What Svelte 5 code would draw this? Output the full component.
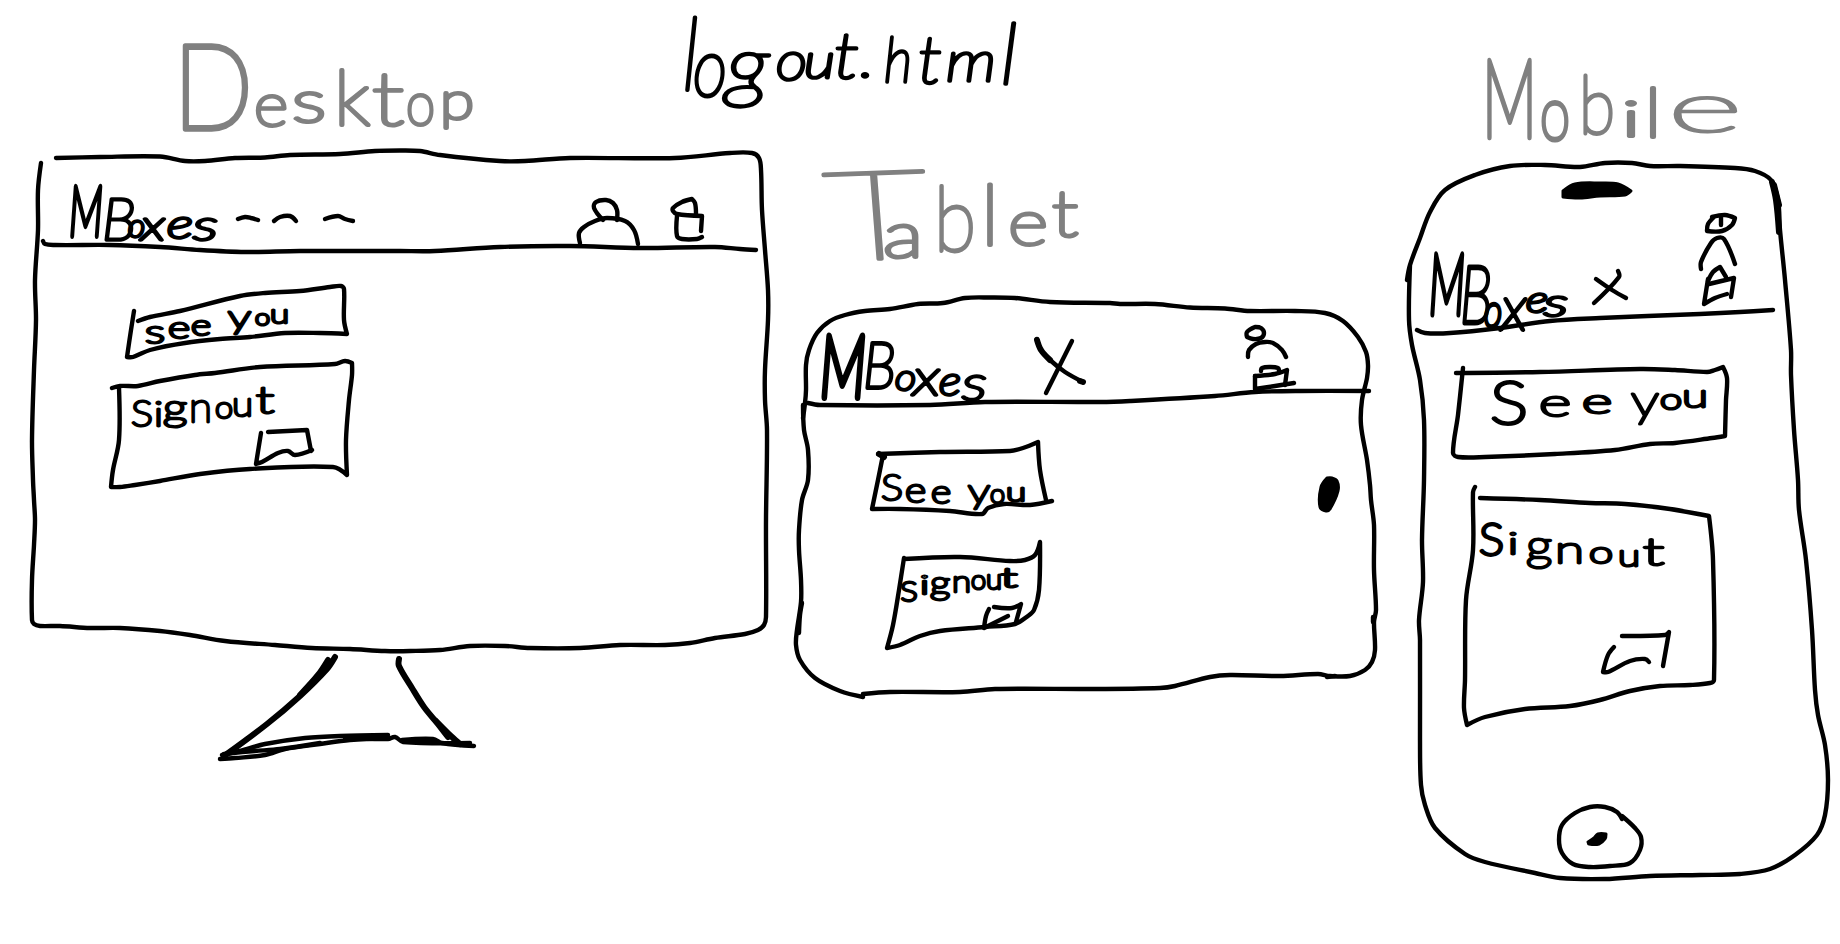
<script>
  // Turns a list of pen points into a smooth stroke; sharp turns stay corners.
  function ink(src) {
    const p = src.split(' ').map((s) => s.split(',').map(Number));
    const n = p.length;
    const tan = p.map((c, i) => {
      if (i === 0 || i === n - 1) return [0, 0];
      const a = [c[0] - p[i - 1][0], c[1] - p[i - 1][1]];
      const b = [p[i + 1][0] - c[0], p[i + 1][1] - c[1]];
      const la = Math.hypot(...a);
      const lb = Math.hypot(...b);
      const dot = (a[0] * b[0] + a[1] * b[1]) / (la * lb || 1);
      if (dot < 0.35) return [0, 0];
      const t = [a[0] + b[0], a[1] + b[1]];
      const lt = Math.hypot(...t);
      return [t[0] / lt, t[1] / lt];
    });
    let d = `M${p[0]}`;
    for (let i = 1; i < n; i++) {
      const k = Math.hypot(p[i][0] - p[i - 1][0], p[i][1] - p[i - 1][1]) / 3;
      const r = (v) => v.toFixed(1);
      d += `C${r(p[i - 1][0] + tan[i - 1][0] * k)},${r(p[i - 1][1] + tan[i - 1][1] * k)} ${r(p[i][0] - tan[i][0] * k)},${r(p[i][1] - tan[i][1] * k)} ${p[i]}`;
    }
    return d;
  }

  const desktop = {
    name: 'desktop',
    strokes: [
      '56,158 100,157 160,156.5 185,161 205,161 235,158 265,157.5 290,155 340,154 375,151 400,150.5 420,151 440,155 500,161 525,161 570,158 675,158 730,153 752,153 759,158 761,170 762,210 765,250 768,290 768,320 765,370 765,400 767,430 766,520 766,617 764,625 758,630 745,634 715,638 690,643 665,645 620,645 580,648 530,648 505,646 470,646 440,650 410,651 385,651 350,649 312,648 275,645 225,641 190,635 160,631 120,628 90,628 60,626 40,626 34,624 32,620 32,580 34,545 35,520 34,500 33,480 32,440 34,370 36,320 35,280 38,230 38,190 41,163',
      '43,241 45,244 55,245 110,245 160,247 200,250 245,252 300,251 400,251 435,251 500,247 570,246 640,248 715,247 740,249 756,250',
      '134,311 131,330 127,357 133,357 150,350 185,343 220,339 250,337 285,333 320,333 347,334 344,320 344,289 341,286 330,287 300,291 265,293 240,296 180,311 150,317 138,321',
      '112,388 120,386 138,386 160,381 195,375 215,373 260,367 335,364 345,361 352,363 352,375 349,400 346,440 347,475 333,467 250,469 200,474 160,481 135,485 120,487 111,487 113,470 119,440 119,388',
      '268,432 307,430 311,451',
      '261,433 256,464 262,462 278,453 288,451 295,455 312,450',
      '238,219 245,217 251,218 258,220',
      '274,221 280,217 290,216 296,221',
      '325,219 338,216 345,219 353,221',
      '603,220 594,208 596,202 606,200 613,203 617,210 617,220',
      '580,243 579,233 584,227 595,221 607,218 625,221 634,230 638,244',
      '696,213 695,203 692,199 682,202 673,208 673,211 677,214 702,216 701,231',
      '677,216 677,236 682,239 697,239 702,237'
    ],
    heavy: [
      '335,657 327,669 300,696 267,724 224,756',
      '328,660 318,675 300,695',
      '399,659 399,666 412,688 424,707 438,724 448,737',
      '436,721 452,737 460,744'
    ],
    light: [
      '222,755 240,751 265,744 305,738 340,736 388,735',
      '345,738 388,739 395,737 403,742 470,743',
      '220,759 235,758 265,755 285,749 320,744 350,740 390,738',
      '402,740 433,739 442,743 474,746',
      '224,754 255,751 280,749 320,743'
    ],
    fills: []
  };

  const tablet = {
    name: 'tablet',
    strokes: [
      '803,418 805,403 806,390 806,365 809,350 817,333 830,321 845,315 865,311 890,309 918,304 943,303 965,298 990,297.5 1015,298 1050,302 1110,303 1120,304 1155,304 1190,307.5 1225,308.5 1250,311 1295,311 1325,313 1343,321 1358,337 1366,352 1368,365 1367,378 1362,400 1361,425 1367,460 1370,485 1371,500 1374,525 1374,570 1376,610 1374,622 1375,650 1372,662 1365,670 1350,676 1330,676 1318,674 1280,676 1230,675 1210,677 1175,686 1160,688 1095,689 995,689 960,692 890,692 863,694',
      '803,405 804,430 808,450 808,480 802,500 799,530 799,550 801,580 801,602 797,630 796,645 800,660 815,678 840,691 863,697',
      '802,603 800,615 799,633',
      '808,403 820,405 930,405 985,402 1100,402 1130,401 1215,396 1255,392 1300,391 1369,391',
      '1327,677 1335,676',
      '1373,617 1373,622',
      '878,454 940,452 1010,451 1023,448 1038,442 1040,470 1046,500',
      '1052,501 1030,505 1004,504 988,508 982,514 950,511 900,509 872,509 878,480 883,455',
      '904,559 960,557 1010,561 1025,560 1035,555 1040,542 1039,590 1034,610 1028,616 1015,624 985,627 940,631 920,636 900,645 887,648 893,625 899,590 904,558',
      '994,607 1012,608 1021,604 1016,622',
      '989,609 986,616 984,628 1008,616',
      '1037,339 1041,350 1050,360 1065,372 1083,382',
      '1072,341 1061,363 1046,393',
      '1255,327 1247,332 1247,337 1253,339 1261,338 1264,333 1261,328 1255,327',
      '1248,357 1249,350 1256,344 1265,342 1273,343 1282,350 1286,357',
      '1261,371 1262,368 1270,367 1278,368 1279,371',
      '1255,376 1275,374 1287,370 1285,385',
      '1255,376 1255,389 1275,386 1294,383'
    ],
    heavy: ['1037,340 1041,350 1050,360', '1083,382 1080,381', '879,454 884,457'],
    light: [],
    fills: ['1327,478 1321,487 1320,507 1326,511 1330,509 1338,491 1337,481 1332,478 1327,478']
  };

  const phone = {
    name: 'mobile',
    strokes: [
      '1407,280 1410,265 1420,238 1430,212 1445,190 1475,175 1510,166 1545,165 1580,167 1605,163 1632,163 1650,166 1680,166 1735,168 1755,171 1771,180 1778,200 1780,230 1785,280 1791,350 1791,375 1794,430 1798,480 1799,510 1806,560 1812,630 1815,690 1818,715 1825,745 1828,780 1825,815 1817,835 1795,855 1770,869 1740,874 1700,875 1650,876 1605,879 1560,878 1535,873 1485,862 1465,854 1435,828 1425,805 1421,785 1420,740 1420,640 1419,620 1423,582 1422,540 1424,480 1424,420 1420,380 1412,345 1409,320 1410,265',
      '1417,330 1425,333 1450,333 1500,328 1550,321 1600,318 1700,314 1740,312 1773,310',
      '1456,373 1540,372 1640,369 1675,370 1707,372 1715,370 1723,367 1727,378 1726,400 1725,436 1712,438 1675,443 1650,444 1615,450 1555,454 1485,457 1458,457 1453,453 1458,415 1463,368',
      '1475,487 1473,492 1473,550 1466,600 1465,680 1464,708 1467,725 1485,717 1525,709 1570,706 1600,700 1630,691 1660,686 1690,685 1710,683 1714,680 1713,560 1709,516 1670,509 1625,504 1590,503 1540,500 1480,498',
      '1622,636 1665,635 1669,632 1663,666',
      '1614,647 1608,655 1603,672 1608,672 1630,661 1645,659 1649,662',
      '1622,819 1617,812 1605,807 1590,807 1575,813 1562,825 1559,840 1562,853 1573,864 1590,867 1610,866 1630,863 1640,850 1641,837 1635,828 1622,816',
      '1596,279 1612,290 1626,298',
      '1618,271 1619,277 1594,303',
      '1712,217 1725,215 1735,218 1732,225 1722,231 1707,231 1708,224 1714,217',
      '1721,218 1721,225',
      '1701,269 1701,262 1711,243 1717,238 1724,239 1735,264',
      '1708,281 1713,272 1720,267 1726,277',
      '1709,284 1734,278 1731,297',
      '1708,279 1704,304 1715,298 1727,294'
    ],
    heavy: ['1772,182 1776,200 1779,232', '1774,185 1779,205'],
    light: [],
    fills: [
      '1563,191 1575,184 1600,183 1618,184 1631,191 1625,195 1600,196 1580,198 1563,197 1563,191',
      '1588,842 1594,838 1598,834 1606,834 1605,839 1599,844 1589,844 1588,842'
    ]
  };

  const devices = [desktop, tablet, phone];

  // Each letter: character, left edge, width, baseline, font size, stroke width, tilt.
  const words = [
    { pen: 'title', g: [['l', 682, 17, 90, 100, 4], ['o', 693, 34, 96, 82, 4], ['g', 726, 43, 92, 78, 3.6], ['o', 776, 31, 80, 54], ['u', 804, 31, 78, 48], ['t', 834, 25, 78, 64], ['.', 860, 14, 77, 50], ['h', 884, 28, 82, 62], ['t', 918, 24, 83, 66], ['m', 946, 50, 81, 56], ['l', 1000, 18, 84, 84]] },
    { pen: 'label', g: [['D', 173, 80, 129, 118, 5.5], ['e', 254, 34, 126, 60], ['s', 292, 34, 122, 58], ['k', 334, 36, 125, 76], ['t', 372, 32, 125, 74], ['o', 406, 29, 125, 60], ['p', 440, 34, 119, 52]] },
    { pen: 'label', g: [['T', 828, 104, 261, 124, 3.4, -3], ['a', 883, 40, 257, 62], ['b', 934, 42, 251, 90], ['l', 980, 20, 245, 84], ['e', 1008, 40, 245, 64], ['t', 1052, 26, 236, 64]] },
    { pen: 'label', g: [['M', 1482, 55, 137, 108, 6.5], ['o', 1540, 30, 140, 76, 5], ['b', 1579, 36, 134, 80], ['i', 1622, 18, 136, 48], ['l', 1644, 18, 137, 68], ['e', 1668, 74, 132, 70, 3]] },

    { pen: 'brand', g: [['M', 69, 34, 236, 70, 6], ['B', 102, 34, 240, 58, 3.6], ['o', 128, 17, 237, 32], ['x', 141, 24, 240, 42], ['e', 167, 26, 238, 40], ['s', 193, 25, 240, 42]] },
    { pen: 'brand', g: [['M', 820, 46, 397, 86, 8], ['B', 863, 33, 388, 64, 4], ['o', 895, 21, 390, 36], ['x', 913, 27, 395, 50], ['e', 939, 22, 395, 40], ['s', 962, 25, 400, 48]] },
    { pen: 'brand', g: [['M', 1429, 36, 314, 84, 7], ['B', 1460, 32, 323, 80, 4.8], ['o', 1484, 18, 327, 46, 4.4], ['x', 1501, 26, 330, 62, 3.8], ['e', 1526, 22, 312, 36], ['s', 1544, 24, 316, 38]] },

    { pen: 'note', g: [['s', 145, 20, 343, 32], ['e', 168, 22, 338, 30], ['e', 191, 20, 335, 28], [' ', 211, 16, 334, 28], ['y', 228, 23, 328, 32], ['o', 255, 15, 325, 22], ['u', 270, 19, 323, 26]] },
    { pen: 'note', g: [['S', 131, 22, 426, 36], ['i', 154, 9, 426, 33], ['g', 163, 24, 420, 36], ['n', 189, 23, 422, 42], ['o', 215, 18, 418, 30], ['u', 232, 21, 416, 34], ['t', 256, 18, 413, 36]] },
    { pen: 'note', g: [['S', 881, 22, 500, 35], ['e', 905, 21, 502, 33], ['e', 931, 20, 503, 31], [' ', 951, 16, 503, 31], ['y', 968, 22, 503, 34], ['o', 990, 15, 503, 26], ['u', 1006, 20, 501, 26]] },
    { pen: 'note', g: [['s', 900, 18, 601, 38], ['i', 920, 9, 594, 26], ['g', 930, 20, 594, 32], ['n', 952, 19, 592, 30], ['o', 971, 15, 589, 26], ['u', 986, 16, 589, 27], ['t', 1001, 16, 587, 26]] },
    { pen: 'note', g: [['S', 1490, 38, 424, 59, 4], ['e', 1539, 32, 416, 38], ['e', 1582, 30, 413, 34], [' ', 1612, 16, 410, 36], ['y', 1631, 28, 416, 44], ['o', 1660, 22, 409, 28], ['u', 1682, 26, 407, 32]] },
    { pen: 'note', g: [['S', 1479, 25, 555, 43, 3.8], ['i', 1508, 10, 554, 30], ['g', 1526, 26, 560, 42], ['n', 1555, 29, 563, 38], ['o', 1589, 24, 563, 30], ['u', 1618, 22, 566, 30], ['t', 1643, 21, 565, 38]] }
  ];
</script>

<main>
  <svg class="board" viewBox="0 0 1840 944" width="1840" height="944">
    {#each devices as device (device.name)}
      <g>
        {#each device.strokes as s}<path class="line" d={ink(s)} />{/each}
        {#each device.heavy as s}<path class="line heavy" d={ink(s)} />{/each}
        {#each device.light as s}<path class="line" d={ink(s)} />{/each}
        {#each device.fills as s}<path class="line solid" d={ink(s)} />{/each}
      </g>
    {/each}
    {#each words as word}
      <text class={word.pen} xml:space="preserve">{#each word.g as [ch, x, w, y, size, pen, tilt]}<tspan {x} {y} rotate={tilt} font-size={size} stroke-width={pen} textLength={w} lengthAdjust="spacingAndGlyphs">{ch}</tspan>{/each}</text>
    {/each}
  </svg>
</main>

<style>
  :global(body) {
    margin: 0;
    background: #fff;
  }
  main {
    width: 1840px;
    height: 944px;
    overflow: hidden;
    background: #fff;
  }
  .board {
    display: block;
  }
  .line {
    fill: none;
    stroke: #000;
    stroke-width: 4.4;
    stroke-linecap: round;
    stroke-linejoin: round;
  }
  .heavy {
    stroke-width: 6;
  }
  .solid {
    fill: #000;
    stroke-width: 3;
  }
  text {
    font-family: Lato, 'Open Sans', sans-serif;
    font-style: italic;
    font-weight: 100;
    fill: #000;
    stroke: #000;
    stroke-width: 3.4;
    stroke-linejoin: round;
    stroke-linecap: round;
  }
  .label {
    fill: #808080;
    stroke: #808080;
    stroke-width: 4;
    font-style: normal;
  }
  .title {
    stroke-width: 3.6;
  }
  .note {
    font-style: normal;
    stroke-width: 3;
  }
</style>
